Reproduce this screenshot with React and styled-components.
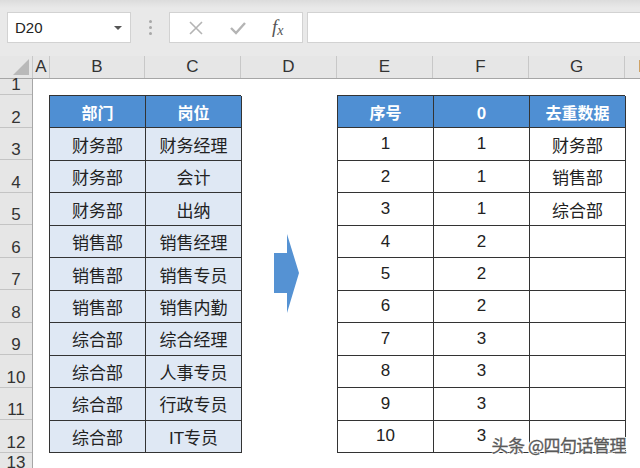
import React from "react";
import styled, { createGlobalStyle } from "styled-components";

const GlobalStyle = createGlobalStyle`
  html, body {
    margin: 0;
    padding: 0;
    background: #ffffff;
    overflow: hidden;
  }
  body {
    font-family: "Liberation Sans", "Noto Sans CJK SC", sans-serif;
  }
`;

const COLS = [
  { key: "A", w: 17 },
  { key: "B", w: 95 },
  { key: "C", w: 96 },
  { key: "D", w: 96 },
  { key: "E", w: 96 },
  { key: "F", w: 96 },
  { key: "G", w: 96 },
  { key: "H", w: 40 },
];

const ROW_H = 32.55;

const left = [
  ["财务部", "财务经理"],
  ["财务部", "会计"],
  ["财务部", "出纳"],
  ["销售部", "销售经理"],
  ["销售部", "销售专员"],
  ["销售部", "销售内勤"],
  ["综合部", "综合经理"],
  ["综合部", "人事专员"],
  ["综合部", "行政专员"],
  ["综合部", "IT专员"],
];

const right = [
  [1, 1, "财务部"],
  [2, 1, "销售部"],
  [3, 1, "综合部"],
  [4, 2, ""],
  [5, 2, ""],
  [6, 2, ""],
  [7, 3, ""],
  [8, 3, ""],
  [9, 3, ""],
  [10, 3, ""],
];

const App = () => {
  return (
    <Page>
      <GlobalStyle />
      <Toolbar>
        <NameBox>
          <span>D20</span>
          <Caret />
        </NameBox>
        <Dots>
          <i />
          <i />
          <i />
        </Dots>
        <FormulaButtons>
          <svg width="16" height="16" viewBox="0 0 16 16">
            <path d="M2 2 L14 14 M14 2 L2 14" stroke="#b4b4b4" strokeWidth="1.6" fill="none" />
          </svg>
          <svg width="18" height="16" viewBox="0 0 18 16">
            <path d="M2 8 L7 13 L16 3" stroke="#b4b4b4" strokeWidth="2.4" fill="none" />
          </svg>
          <Fx>
            f<sub>x</sub>
          </Fx>
        </FormulaButtons>
        <FormulaInput />
      </Toolbar>

      <HeaderRow>
        <Corner>
          <svg width="16" height="16" viewBox="0 0 16 16">
            <polygon points="16,0 16,16 0,16" fill="#b9b9b9" />
          </svg>
        </Corner>
        {COLS.map((c) => (
          <ColHead key={c.key} $w={c.w}>
            {c.key}
          </ColHead>
        ))}
      </HeaderRow>

      <Body>
        <RowHeads>
          <RowHead $h={16}>1</RowHead>
          {Array.from({ length: 11 }, (_, i) => (
            <RowHead key={i} $h={ROW_H}>
              {i + 2}
            </RowHead>
          ))}
          <RowHead $h={20}>13</RowHead>
        </RowHeads>

        <Sheet>
          <LeftTable>
            <HeadCell>部门</HeadCell>
            <HeadCell>岗位</HeadCell>
            {left.map((r, i) => (
              <React.Fragment key={i}>
                <Cell $tint>{r[0]}</Cell>
                <Cell $tint>{r[1]}</Cell>
              </React.Fragment>
            ))}
          </LeftTable>

          <ArrowSlot>
            <svg width="26" height="80" viewBox="0 0 26 80">
              <polygon points="0,19 13,19 13,0 25,39 13,79 13,59 0,59" fill="#5592d3" />
            </svg>
          </ArrowSlot>

          <RightTable>
            <HeadCell>序号</HeadCell>
            <HeadCell>0</HeadCell>
            <HeadCell>去重数据</HeadCell>
            {right.map((r, i) => (
              <React.Fragment key={i}>
                <Cell>{r[0]}</Cell>
                <Cell>{r[1]}</Cell>
                <Cell>{r[2]}</Cell>
              </React.Fragment>
            ))}
          </RightTable>
        </Sheet>

        <Watermark>头条 @四句话管理</Watermark>
      </Body>
    </Page>
  );
};

const Page = styled.div`
  width: 640px;
  height: 468px;
  overflow: hidden;
  background: #ffffff;
  display: flex;
  flex-direction: column;
`;

const Toolbar = styled.div`
  height: 56px;
  flex: none;
  display: flex;
  align-items: flex-start;
  padding: 12px 0 0 7px;
  box-sizing: border-box;
  background: linear-gradient(#dcdcdc 0px, #e9e9e9 8px, #e9e9e9 100%);
`;

const NameBox = styled.div`
  width: 124px;
  height: 31px;
  box-sizing: border-box;
  background: #ffffff;
  border: 1px solid #d2d2d2;
  display: flex;
  align-items: center;
  justify-content: space-between;
  padding: 0 8px 0 7px;
  font-size: 15px;
  color: #222;
`;

const Caret = styled.span`
  width: 0;
  height: 0;
  border-left: 4px solid transparent;
  border-right: 4px solid transparent;
  border-top: 4px solid #555;
`;

const Dots = styled.div`
  width: 38px;
  height: 31px;
  display: flex;
  flex-direction: column;
  align-items: center;
  justify-content: center;
  gap: 3px;

  i {
    width: 3px;
    height: 3px;
    border-radius: 50%;
    background: #a8a8a8;
  }
`;

const FormulaButtons = styled.div`
  width: 134px;
  height: 31px;
  box-sizing: border-box;
  background: #ffffff;
  border: 1px solid #d2d2d2;
  display: flex;
  align-items: center;
  justify-content: space-around;
  padding: 0 6px;
`;

const Fx = styled.span`
  font-family: "Liberation Serif", serif;
  font-style: italic;
  font-size: 19px;
  color: #555;
  line-height: 1;

  sub {
    font-size: 14px;
    vertical-align: -2px;
  }
`;

const FormulaInput = styled.div`
  flex: 1;
  height: 31px;
  margin-left: 4px;
  background: #ffffff;
  border: 1px solid #d2d2d2;
  border-right: none;
  box-sizing: border-box;
`;

const HeaderRow = styled.div`
  height: 23px;
  flex: none;
  display: flex;
  background: #e6e6e6;
  border-bottom: 1px solid #a6a6a6;
  box-sizing: border-box;
`;

const Corner = styled.div`
  width: 33px;
  flex: none;
  display: flex;
  align-items: flex-end;
  justify-content: flex-end;
  padding: 0 3px 3px 0;
  box-sizing: border-box;
  border-right: 1px solid #c8c8c8;
`;

const ColHead = styled.div`
  width: ${({ $w }) => $w}px;
  flex: none;
  box-sizing: border-box;
  border-right: 1px solid #c8c8c8;
  display: flex;
  align-items: flex-end;
  justify-content: center;
  font-size: 17px;
  line-height: 22px;
  color: #333;
`;

const Body = styled.div`
  flex: 1;
  display: flex;
  position: relative;
  min-height: 0;
`;

const RowHeads = styled.div`
  width: 33px;
  flex: none;
  background: #e6e6e6;
  border-right: 1px solid #a6a6a6;
  box-sizing: border-box;
  display: flex;
  flex-direction: column;
`;

const RowHead = styled.div`
  height: ${({ $h }) => $h}px;
  flex: none;
  box-sizing: border-box;
  border-bottom: 1px solid #c4c4c4;
  display: flex;
  align-items: flex-end;
  justify-content: center;
  font-size: 17px;
  line-height: 17px;
  padding-bottom: 1px;
  color: #333;
`;

const Sheet = styled.div`
  flex: 1;
  display: grid;
  grid-template-columns: 16px 96px 96px 96px 96px 96px 96px 1fr;
  grid-template-rows: 16px repeat(11, ${ROW_H}px) 1fr;
`;

const BaseTable = styled.div`
  display: grid;
  grid-auto-rows: 1fr;
  border-top: 1.5px solid #333;
  border-left: 1.5px solid #333;
  align-self: stretch;
`;

const LeftTable = styled(BaseTable)`
  grid-column: 2 / 4;
  grid-row: 2 / 13;
  grid-template-columns: 96px 96px;
`;

const RightTable = styled(BaseTable)`
  grid-column: 5 / 8;
  grid-row: 2 / 13;
  grid-template-columns: 96px 96px 96px;
`;

const HeadCell = styled.div`
  background: #4f8fd3;
  color: #ffffff;
  font-weight: bold;
  font-family: "Noto Sans CJK SC", sans-serif;
  font-size: 16px;
  display: flex;
  align-items: center;
  justify-content: center;
  border-right: 1.5px solid #333;
  border-bottom: 1.5px solid #333;
`;

const Cell = styled.div`
  background: ${({ $tint }) => ($tint ? "#dfe8f4" : "#ffffff")};
  color: #222;
  font-family: "Liberation Sans", "Noto Sans CJK SC", sans-serif;
  font-size: 17px;
  display: flex;
  align-items: center;
  justify-content: center;
  border-right: 1.5px solid #333;
  border-bottom: 1.5px solid #333;
`;

const ArrowSlot = styled.div`
  grid-column: 4 / 5;
  grid-row: 6 / 9;
  display: flex;
  align-items: center;
  padding-left: 33px;
`;

const Watermark = styled.div`
  position: absolute;
  right: 14px;
  bottom: 11px;
  font-family: "Noto Sans CJK SC", sans-serif;
  font-size: 17px;
  color: #5a5a5a;
  -webkit-text-stroke: 0.3px #5a5a5a;
  text-shadow: 1px 1px 0 #fff, -1px -1px 0 #fff, 1px -1px 0 #fff, -1px 1px 0 #fff;
  letter-spacing: -0.5px;
`;

export default App;
